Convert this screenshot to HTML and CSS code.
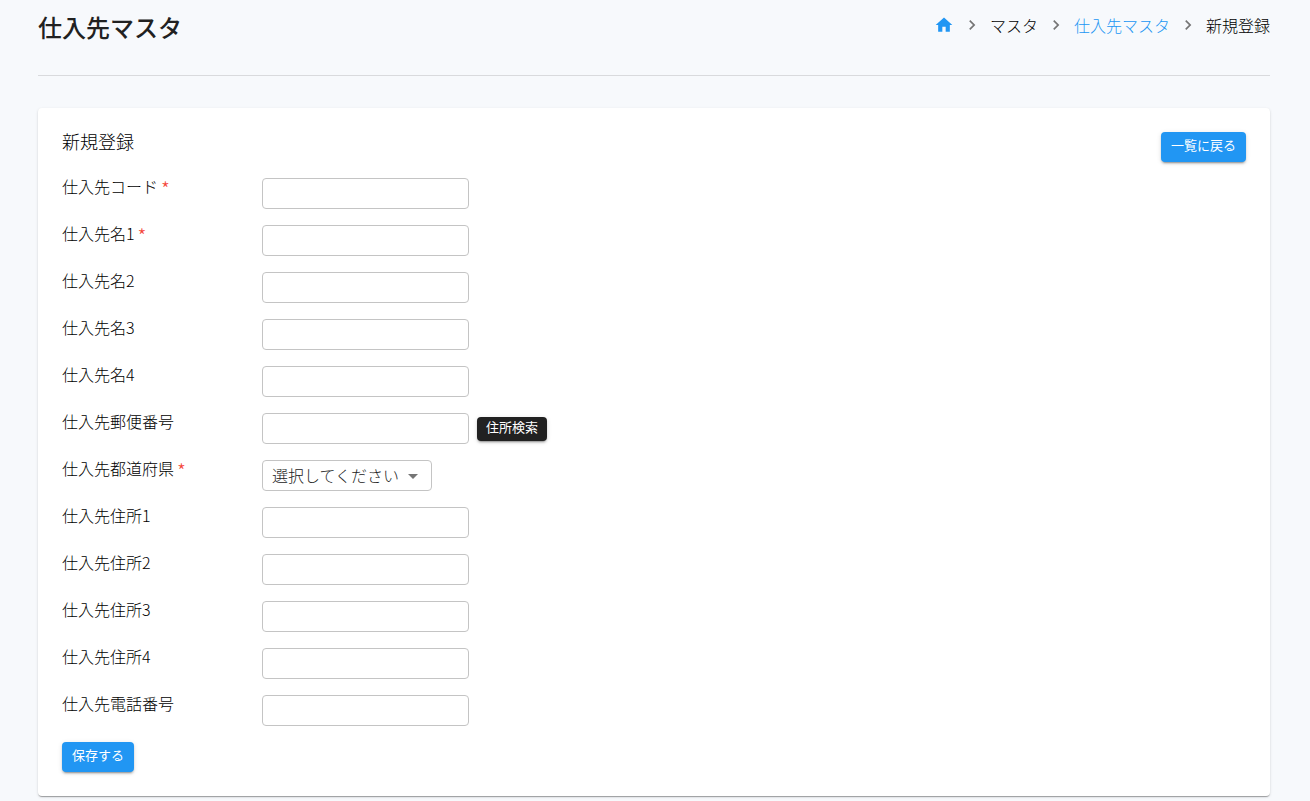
FILE: index.html
```html
<!DOCTYPE html>
<html lang="ja">
<head>
<meta charset="utf-8">
<meta name="viewport" content="width=device-width, initial-scale=1">
<title>仕入先マスタ</title>
<link rel="stylesheet" href="styles.css">
</head>
<body>
<main class="page">
  <header class="page-header">
    <h1 class="page-title">仕入先マスタ</h1>
    <nav class="breadcrumbs" aria-label="パンくず">
      <a class="crumb-link" href="#" aria-label="ホーム"><svg class="icon" viewBox="0 0 24 24"><path d="M10 20v-6h4v6h5v-8h3L12 3 2 12h3v8z"/></svg></a>
      <svg class="icon chevron" viewBox="0 0 24 24"><path d="M10 6 8.59 7.41 13.17 12l-4.58 4.59L10 18l6-6z"/></svg>
      <span>マスタ</span>
      <svg class="icon chevron" viewBox="0 0 24 24"><path d="M10 6 8.59 7.41 13.17 12l-4.58 4.59L10 18l6-6z"/></svg>
      <a class="crumb-link" href="#">仕入先マスタ</a>
      <svg class="icon chevron" viewBox="0 0 24 24"><path d="M10 6 8.59 7.41 13.17 12l-4.58 4.59L10 18l6-6z"/></svg>
      <span>新規登録</span>
    </nav>
  </header>
  <section class="card">
    <div class="card-header">
      <h2 class="card-title">新規登録</h2>
      <button class="button" type="button">一覧に戻る</button>
    </div>
    <form class="form">
      <div class="row"><label class="label" for="code">仕入先コード<span class="required">*</span></label><input class="field" id="code" type="text" required></div>
      <div class="row"><label class="label" for="name1">仕入先名1<span class="required">*</span></label><input class="field" id="name1" type="text" required></div>
      <div class="row"><label class="label" for="name2">仕入先名2</label><input class="field" id="name2" type="text"></div>
      <div class="row"><label class="label" for="name3">仕入先名3</label><input class="field" id="name3" type="text"></div>
      <div class="row"><label class="label" for="name4">仕入先名4</label><input class="field" id="name4" type="text"></div>
      <div class="row"><label class="label" for="zip">仕入先郵便番号</label><input class="field" id="zip" type="text"><button class="button button-dark" type="button">住所検索</button></div>
      <div class="row"><label class="label" for="pref">仕入先都道府県<span class="required">*</span></label>
        <div class="select-box">
          <select class="field select" id="pref" required><option value="">選択してください</option></select>
          <svg class="select-arrow" viewBox="0 0 10 5"><path d="M0 0h10L5 5z"/></svg>
        </div>
      </div>
      <div class="row"><label class="label" for="addr1">仕入先住所1</label><input class="field" id="addr1" type="text"></div>
      <div class="row"><label class="label" for="addr2">仕入先住所2</label><input class="field" id="addr2" type="text"></div>
      <div class="row"><label class="label" for="addr3">仕入先住所3</label><input class="field" id="addr3" type="text"></div>
      <div class="row"><label class="label" for="addr4">仕入先住所4</label><input class="field" id="addr4" type="text"></div>
      <div class="row"><label class="label" for="tel">仕入先電話番号</label><input class="field" id="tel" type="text"></div>
      <button class="button button-save" type="submit">保存する</button>
    </form>
  </section>
</main>
</body>
</html>
```
FILE: styles.css
```css
* {
  box-sizing: border-box;
}

body {
  margin: 0;
  background: #f7f9fc;
  color: #000;
  font-family: "Noto Sans CJK JP", sans-serif;
  font-size: 16px;
  font-weight: 300;
  line-height: 20px;
}

.page {
  padding: 12px 40px 5px 38px;
}

.page-header {
  display: flex;
  justify-content: space-between;
  align-items: flex-start;
  height: 64px;
  margin-bottom: 32px;
  border-bottom: 1px solid rgba(0, 0, 0, 0.12);
}

.page-title {
  margin: 0;
  color: #212121;
  font-size: 24px;
  font-weight: 500;
  line-height: 30px;
}

.breadcrumbs {
  display: flex;
  align-items: center;
  gap: 8px;
  padding-top: 3px;
}

.crumb-link {
  display: flex;
  color: #2196f3;
  text-decoration: none;
}

.icon {
  width: 20px;
  height: 20px;
  fill: currentColor;
}

.chevron {
  color: #757575;
}

.card {
  padding: 24px;
  border-radius: 4px;
  background: #fff;
  box-shadow: 0 2px 1px -1px rgba(0, 0, 0, 0.2), 0 1px 1px rgba(0, 0, 0, 0.14), 0 1px 3px rgba(0, 0, 0, 0.12);
}

.card-header {
  display: flex;
  justify-content: space-between;
  align-items: flex-start;
  margin-bottom: 16px;
}

.card-title {
  margin: 0;
  font-size: 18px;
  font-weight: 300;
  line-height: 18px;
}

.form {
  display: flex;
  flex-direction: column;
  align-items: flex-start;
  gap: 16px;
}

.row {
  display: flex;
  align-items: flex-start;
}

.label {
  width: 200px;
  line-height: 16px;
}

.required {
  margin-left: 3px;
  color: #f44336;
  font-size: 20px;
  line-height: 1px;
  vertical-align: -4px;
}

.field {
  width: 207px;
  height: 31px;
  padding: 2px 9px 4px;
  border: 1px solid #c4c4c4;
  border-radius: 4px;
  background: #fff;
  color: #212121;
  font: inherit;
}

.select-box {
  position: relative;
}

.select {
  width: 170px;
  appearance: none;
}

.select-arrow {
  position: absolute;
  top: 14px;
  right: 14px;
  width: 10px;
  height: 5px;
  fill: #757575;
  pointer-events: none;
}

.button {
  height: 30px;
  padding: 0 10px 4px;
  border: 0;
  border-radius: 4px;
  background: #2196f3;
  box-shadow: 0 3px 1px -2px rgba(0, 0, 0, 0.2), 0 2px 2px rgba(0, 0, 0, 0.14), 0 1px 5px rgba(0, 0, 0, 0.12);
  color: #fff;
  font: inherit;
  font-size: 13px;
  font-weight: 400;
}

.button-dark {
  height: 24px;
  margin: 4px 0 0 8px;
  padding: 0 9px 4px;
  background: #212121;
}
```
